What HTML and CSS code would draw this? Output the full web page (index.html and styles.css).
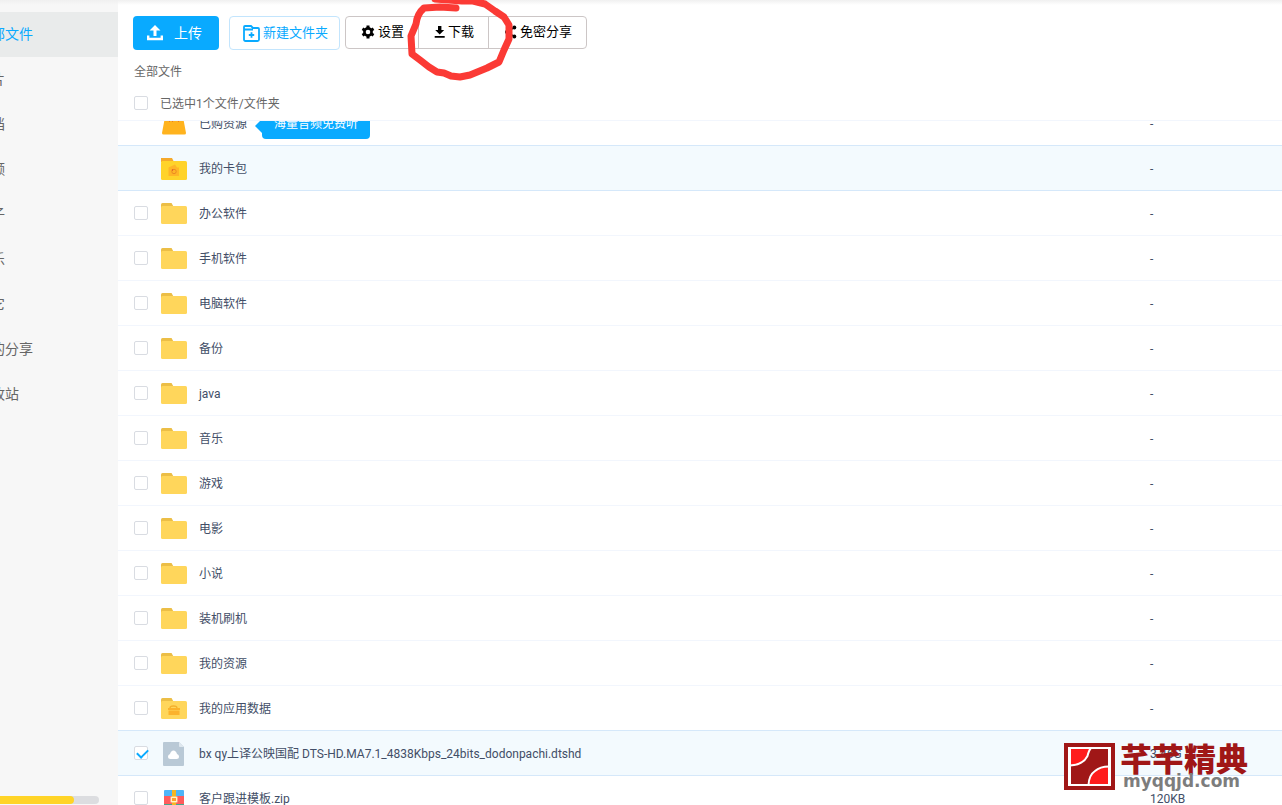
FILE: index.html
```html
<!DOCTYPE html>
<html lang="zh-CN">
<head>
<meta charset="utf-8">
<title>全部文件</title>
<link rel="stylesheet" href="styles.css">
</head>
<body>
<svg class="sprite" aria-hidden="true">
  <symbol id="folder" viewBox="0 0 26 22">
    <path d="M0 1.500Q0 0 1.500 0H10.500L12.500 3.500V8H0Z" fill="#ecbe46"/>
    <rect y="3" width="26" height="18" rx="1.500" fill="#ffd65b"/>
  </symbol>
</svg>
<div class="app">
  <aside class="sidebar">
    <nav class="menu">
      <a class="menu-item current" href="#">全部文件</a>
      <a class="menu-item" href="#">图片</a>
      <a class="menu-item" href="#">文档</a>
      <a class="menu-item" href="#">视频</a>
      <a class="menu-item" href="#">种子</a>
      <a class="menu-item" href="#">音乐</a>
      <a class="menu-item" href="#">其它</a>
      <a class="menu-item" href="#">我的分享</a>
      <a class="menu-item" href="#">回收站</a>
    </nav>
    <div class="quota"><div class="quota-used"></div></div>
  </aside>
  <main class="main">
    <div class="toolbar">
      <button class="btn upload" type="button">
        <svg width="16" height="16" viewBox="0 0 16 16"><path d="M1.200 10.500V14H14.800V10.500" fill="none" stroke="#fff" stroke-width="2.400"/><path d="M8 0L13.500 5.500H9.500V11H6.500V5.500H2.500Z" fill="#fff"/></svg>
        <span>上传</span>
      </button>
      <button class="btn create" type="button">
        <svg width="17" height="17" viewBox="0 0 17 17" fill="none" stroke="#09aaff" stroke-width="1.800"><path d="M1 14V2Q1 1 2 1H8L10 3H15Q16 3 16 4V14.500Q16 16 14.500 16H2.500Q1 16 1 14.500ZM1 4.500H10"/><path d="M8.500 7.300V12.700M5.800 10H11.200" stroke-width="1.800"/></svg>
        <span>新建文件夹</span>
      </button>
      <div class="group">
        <button class="tool" type="button">
          <svg width="14" height="14" viewBox="0 0 14 14"><circle cx="7" cy="7" r="3.600" fill="none" stroke="#000" stroke-width="2.600"/><path d="M7 .6V3M7 11V13.400M1.450 3.800L3.500 5M10.500 9L12.550 10.200M1.450 10.200L3.500 9M10.500 5L12.550 3.800" stroke="#000" stroke-width="3"/></svg>
          <span>设置</span>
        </button>
        <button class="tool" type="button">
          <svg width="11" height="12" viewBox="0 0 11 12"><path d="M4 0H7.400V4H10.200L5.700 8.500L1.200 4H4ZM.7 10H10.700V11.800H.7Z"/></svg>
          <span>下载</span>
        </button>
        <button class="tool" type="button">
          <svg width="13" height="14" viewBox="0 0 13 14"><path d="M10.500 2.500L3 7L10.500 11.500" fill="none" stroke="#000" stroke-width="1.400"/><circle cx="10.300" cy="2.500" r="2"/><circle cx="3" cy="7" r="2"/><circle cx="10.300" cy="11.500" r="2"/></svg>
          <span>免密分享</span>
        </button>
      </div>
    </div>
    <div class="crumb">全部文件</div>
    <label class="select-all"><input class="check" type="checkbox"><span>已选中1个文件/文件夹</span></label>
    <div class="list">
      <table class="files">
        <tbody>
          <tr>
            <td class="c-check"></td>
            <td class="c-icon"><svg width="26" height="22" viewBox="0 0 26 22"><path d="M4 4H22L25 20Q25 21.500 23.500 21.500H2.500Q1 21.500 1 20Z" fill="#ffb31e"/><path d="M8 8h1M11 8h1M17 8h1" stroke="#e0402a" stroke-width="1.200"/></svg></td>
            <td class="c-name">已购资源<span class="tip">海量音频免费听</span></td>
            <td class="c-size">-</td>
          </tr>
          <tr class="on">
            <td class="c-check"></td>
            <td class="c-icon"><svg width="26" height="22" viewBox="0 0 26 22"><path d="M0 0H11L13 4H0Z" fill="#f5a92b"/><rect y="3" width="26" height="19" rx="1.500" fill="#ffd32a"/><path d="M7.500 9.500L14 6.500L16 9.500H18V18H7.500Z" fill="#ffb526"/><circle cx="13" cy="13.500" r="2.200" fill="none" stroke="#ec8b22"/><circle cx="11.500" cy="12" r=".7" fill="#d9502a"/></svg></td>
            <td class="c-name">我的卡包</td>
            <td class="c-size">-</td>
          </tr>
          <tr><td class="c-check"><input class="check" type="checkbox" aria-label="办公软件"></td><td class="c-icon"><svg width="26" height="22"><use href="#folder"/></svg></td><td class="c-name">办公软件</td><td class="c-size">-</td></tr>
          <tr><td class="c-check"><input class="check" type="checkbox" aria-label="手机软件"></td><td class="c-icon"><svg width="26" height="22"><use href="#folder"/></svg></td><td class="c-name">手机软件</td><td class="c-size">-</td></tr>
          <tr><td class="c-check"><input class="check" type="checkbox" aria-label="电脑软件"></td><td class="c-icon"><svg width="26" height="22"><use href="#folder"/></svg></td><td class="c-name">电脑软件</td><td class="c-size">-</td></tr>
          <tr><td class="c-check"><input class="check" type="checkbox" aria-label="备份"></td><td class="c-icon"><svg width="26" height="22"><use href="#folder"/></svg></td><td class="c-name">备份</td><td class="c-size">-</td></tr>
          <tr><td class="c-check"><input class="check" type="checkbox" aria-label="java"></td><td class="c-icon"><svg width="26" height="22"><use href="#folder"/></svg></td><td class="c-name">java</td><td class="c-size">-</td></tr>
          <tr><td class="c-check"><input class="check" type="checkbox" aria-label="音乐"></td><td class="c-icon"><svg width="26" height="22"><use href="#folder"/></svg></td><td class="c-name">音乐</td><td class="c-size">-</td></tr>
          <tr><td class="c-check"><input class="check" type="checkbox" aria-label="游戏"></td><td class="c-icon"><svg width="26" height="22"><use href="#folder"/></svg></td><td class="c-name">游戏</td><td class="c-size">-</td></tr>
          <tr><td class="c-check"><input class="check" type="checkbox" aria-label="电影"></td><td class="c-icon"><svg width="26" height="22"><use href="#folder"/></svg></td><td class="c-name">电影</td><td class="c-size">-</td></tr>
          <tr><td class="c-check"><input class="check" type="checkbox" aria-label="小说"></td><td class="c-icon"><svg width="26" height="22"><use href="#folder"/></svg></td><td class="c-name">小说</td><td class="c-size">-</td></tr>
          <tr><td class="c-check"><input class="check" type="checkbox" aria-label="装机刷机"></td><td class="c-icon"><svg width="26" height="22"><use href="#folder"/></svg></td><td class="c-name">装机刷机</td><td class="c-size">-</td></tr>
          <tr><td class="c-check"><input class="check" type="checkbox" aria-label="我的资源"></td><td class="c-icon"><svg width="26" height="22"><use href="#folder"/></svg></td><td class="c-name">我的资源</td><td class="c-size">-</td></tr>
          <tr><td class="c-check"><input class="check" type="checkbox" aria-label="我的应用数据"></td><td class="c-icon"><svg width="26" height="22" viewBox="0 0 26 22"><use href="#folder"/><path d="M9 10Q9 8 12.500 8T16 10" fill="none" stroke="#f5b02c" stroke-width="1.300"/><path d="M7 10H19V12H7ZM7.500 12.500H18.500V17H7.500Z" fill="#fbb22c"/></svg></td><td class="c-name">我的应用数据</td><td class="c-size">-</td></tr>
          <tr class="on">
            <td class="c-check"><input class="check" type="checkbox" checked aria-label="bx qy上译公映国配"></td>
            <td class="c-icon"><svg width="26" height="24" viewBox="0 0 26 24"><path d="M2 1Q2 0 3 0H18L23 5V23Q23 24 22 24H3Q2 24 2 23Z" fill="#b9c9d6"/><path d="M18 0L23 5H19Q18 5 18 4Z" fill="#dfe8ef"/><path d="M9.500 17Q7 17 7 14.500Q7 12.500 9 12Q10 8.500 12.500 8.500T16 12Q18 12.500 18 14.500Q18 17 15.500 17Z" fill="#fff"/></svg></td>
            <td class="c-name">bx qy上译公映国配 DTS-HD.MA7.1_4838Kbps_24bits_dodonpachi.dtshd</td>
            <td class="c-size">3.46G</td>
          </tr>
          <tr>
            <td class="c-check"><input class="check" type="checkbox" aria-label="客户跟进模板.zip"></td>
            <td class="c-icon"><svg width="26" height="22" viewBox="0 0 26 22"><path d="M3 8V3Q3 2 4 2H22Q23 2 23 3V8Z" fill="#4fb5f8"/><path d="M3 8H23V16H3Z" fill="#ff5c5c"/><path d="M3 16H23V20Q23 21 22 21H4Q3 21 3 20Z" fill="#46a58a"/><path d="M11 2H15V21H11Z" fill="#f5b623"/><rect x="10.300" y="9.300" width="5.400" height="4.400" fill="#ff9d2e" stroke="#fff3c4" stroke-width="1.400"/></svg></td>
            <td class="c-name">客户跟进模板.zip</td>
            <td class="c-size">120KB</td>
          </tr>
        </tbody>
      </table>
    </div>
  </main>
</div>
<svg class="marker" width="110" height="84" viewBox="405 -3 110 84" aria-hidden="true"><path d="M456 8L440 7L424 8Q417 14 416 24L411 36L412 54L420 60L429 67L437 72L444 73L451 76L460 77L470 75L487 68L499 62L504 50L509 39L509 25L504 17L495 11L485 4L473 1L462 1L435 -1" fill="none" stroke="#fb3a35" stroke-width="7" stroke-linecap="round" stroke-linejoin="round"/></svg>
<div class="brand">
  <svg width="51" height="47" viewBox="0 0 51 47"><path d="M0 0H51V47H0Z" fill="#a01717"/><path d="M4 4H47V43H4Z" fill="#fff"/><path d="M7 6H44V41H7Z" fill="#a01717"/><path d="M7 6H26Q24 8 23 13Q19 21 7 22Z" fill="#ff1c1c"/><path d="M44 41H25Q25 32 31 28Q36 24 44 24Z" fill="#ff1c1c"/><path d="M27 5Q25 7 23.500 13Q19 22 6 22.500M24.500 42Q25 32 31 28Q36 23.500 45 23.500" fill="none" stroke="#fff" stroke-width="2"/></svg>
  <div class="brand-text"><span class="brand-name">芊芊精典</span><span class="brand-url">myqqjd.com</span></div>
</div>
</body>
</html>
```
FILE: styles.css
```css
* { box-sizing: border-box; }
body {
  margin: 0;
  background: #fff;
  color: #424e67;
  font: 12px/18px Roboto, "Noto Sans CJK SC", sans-serif;
  overflow: hidden;
}
svg { display: block; flex: none; }
.sprite { position: absolute; width: 0; height: 0; }
.app { display: flex; height: 100vh; }
.app::before {
  content: "";
  position: absolute;
  inset: 0 0 auto;
  height: 5px;
  background: linear-gradient(#f0f0f0, #f0f0f000);
}

.sidebar {
  flex: 0 0 118px;
  display: flex;
  flex-direction: column;
  justify-content: space-between;
  padding: 12px 0 1px;
  background: #f7f7f7;
  overflow: hidden;
}
.menu-item {
  display: block;
  height: 45px;
  line-height: 45px;
  text-indent: -23px;
  font-size: 14px;
  color: #666;
  text-decoration: none;
}
.menu-item.current { background: #e9ebeb; color: #09aaff; }
.quota { width: 99px; height: 8px; border-radius: 0 4px 4px 0; background: #dcdde0; }
.quota-used { width: 75%; height: 8px; border-radius: 0 4px 4px 0; background: #ffd427; }

.main { flex: 1; min-width: 0; display: flex; flex-direction: column; }
.toolbar { display: flex; align-items: flex-start; padding: 16px 15px 12px; }
button { font: inherit; margin: 0; cursor: pointer; white-space: nowrap; }
.btn { display: flex; align-items: center; height: 34px; border-radius: 4px; }
.upload {
  gap: 11px;
  margin-right: 10px;
  padding: 0 17px 0 14px;
  border: 0;
  background: #09aaff;
  color: #fff;
  font-size: 14px;
}
.create {
  gap: 3px;
  margin-right: 5px;
  padding: 0 11px 0 13px;
  border: 1px solid #c3e5fd;
  background: #fff;
  color: #09aaff;
  font-size: 13px;
}
.group { display: flex; height: 33px; border: 1px solid #ccc6c6; border-radius: 4px; }
.tool {
  display: flex;
  align-items: center;
  gap: 3px;
  padding: 0 14px 2px 15px;
  border: 0;
  background: none;
  color: #000;
  font-size: 13px;
}
.tool + .tool { border-left: 1px solid #ccc6c6; }

.crumb { padding: 1px 16px 4px; color: #666; }
.select-all {
  display: flex;
  align-items: center;
  gap: 12px;
  height: 36px;
  padding: 0 16px;
  border-bottom: 1px solid #f2f6fd;
  color: #666;
}
.select-all span { padding-top: 2px; }

.check {
  appearance: none;
  display: block;
  width: 14px;
  height: 14px;
  margin: 0;
  border: 1px solid #d9dce2;
  border-radius: 2px;
  background: #fff;
}
.check:checked::before {
  content: "";
  display: block;
  width: 9px;
  height: 5px;
  margin: 2px;
  border: solid #09aaff;
  border-width: 0 0 2px 2px;
  transform: rotate(-45deg);
}

.list { flex: 1; min-height: 0; overflow: hidden; }
.files { width: 100%; margin-top: -20px; border-spacing: 0; table-layout: fixed; }
.files td { height: 45px; padding: 2px 0 0; border-bottom: 1px solid #f2f6fd; white-space: nowrap; }
.files .on td { background: #f3fafe; border-color: #d5e8fa; }
.files tr:has(+ .on) td { border-color: #d5e8fa; }
.files .c-check { width: 43px; padding: 0 0 0 16px; }
.c-icon { width: 38px; }
.c-size { width: 132px; }
.tip {
  position: relative;
  display: inline-block;
  margin-left: 15px;
  padding: 5px 12px 6px;
  border-radius: 4px;
  background: #09aaff;
  color: #fff;
}
.tip::before {
  content: "";
  position: absolute;
  left: -7px;
  top: 8px;
  border: solid transparent;
  border-width: 8px 8px 8px 0;
  border-right-color: #09aaff;
}

.marker { position: absolute; left: 405px; top: -3px; }
.brand { position: absolute; right: 34px; bottom: 13px; display: flex; align-items: flex-start; gap: 5px; }
.brand-text { display: flex; flex-direction: column; }
.brand-name { font: 900 32px/28px "Noto Sans CJK SC", sans-serif; color: #a01717; }
.brand-url { padding-left: 3px; font: bold 17px/21px "DejaVu Sans", sans-serif; color: #7d7d7d; }
```
